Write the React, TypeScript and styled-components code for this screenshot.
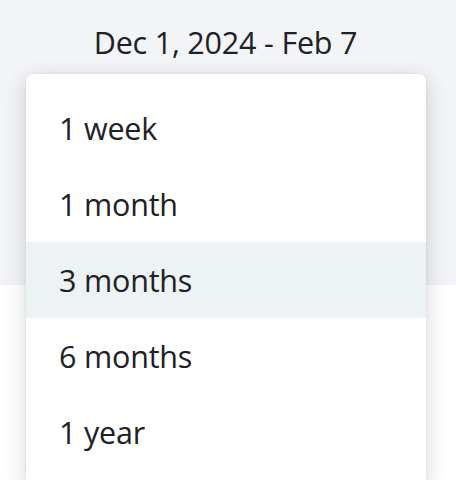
import styled, { createGlobalStyle } from "styled-components";

const Global = createGlobalStyle`
  html, body {
    margin: 0;
    padding: 0;
    background: #ffffff;
    font-family: "Open Sans", "Noto Sans", sans-serif;
    color: #202124;
  }
`;

const Page = styled.div`
  position: relative;
  width: 456px;
  height: 480px;
  overflow: hidden;
`;

const Header = styled.div`
  height: 285px;
  background: #f3f4f7;
  display: flex;
  justify-content: center;
  padding-top: 21px;
  box-sizing: border-box;
`;

const Range = styled.div`
  font-size: 30.5px;
  line-height: 42px;
  letter-spacing: -0.2px;
  margin-left: -5px;
`;

const Menu = styled.ul`
  position: absolute;
  top: 74px;
  left: 26px;
  width: 400px;
  margin: 0;
  padding: 16px 0 16px;
  list-style: none;
  background: #fff;
  border-radius: 7px;
  box-shadow: 0 6px 22px rgba(40, 45, 60, 0.2), 0 0 3px rgba(40, 45, 60, 0.08);
`;

const Item = styled.li<{ active?: boolean }>`
  height: 76px;
  display: flex;
  align-items: center;
  padding-left: 33px;
  font-size: 30.5px;
  letter-spacing: -0.2px;
  background: ${(p) => (p.active ? "#edf2f4" : "transparent")};
`;

const options = ["1 week", "1 month", "3 months", "6 months", "1 year"];

export default function App() {
  return (
    <Page>
      <Global />
      <Header>
        <Range>Dec 1, 2024 - Feb 7</Range>
      </Header>
      <Menu>
        {options.map((o) => (
          <Item key={o} active={o === "3 months"}>
            {o}
          </Item>
        ))}
      </Menu>
    </Page>
  );
}
